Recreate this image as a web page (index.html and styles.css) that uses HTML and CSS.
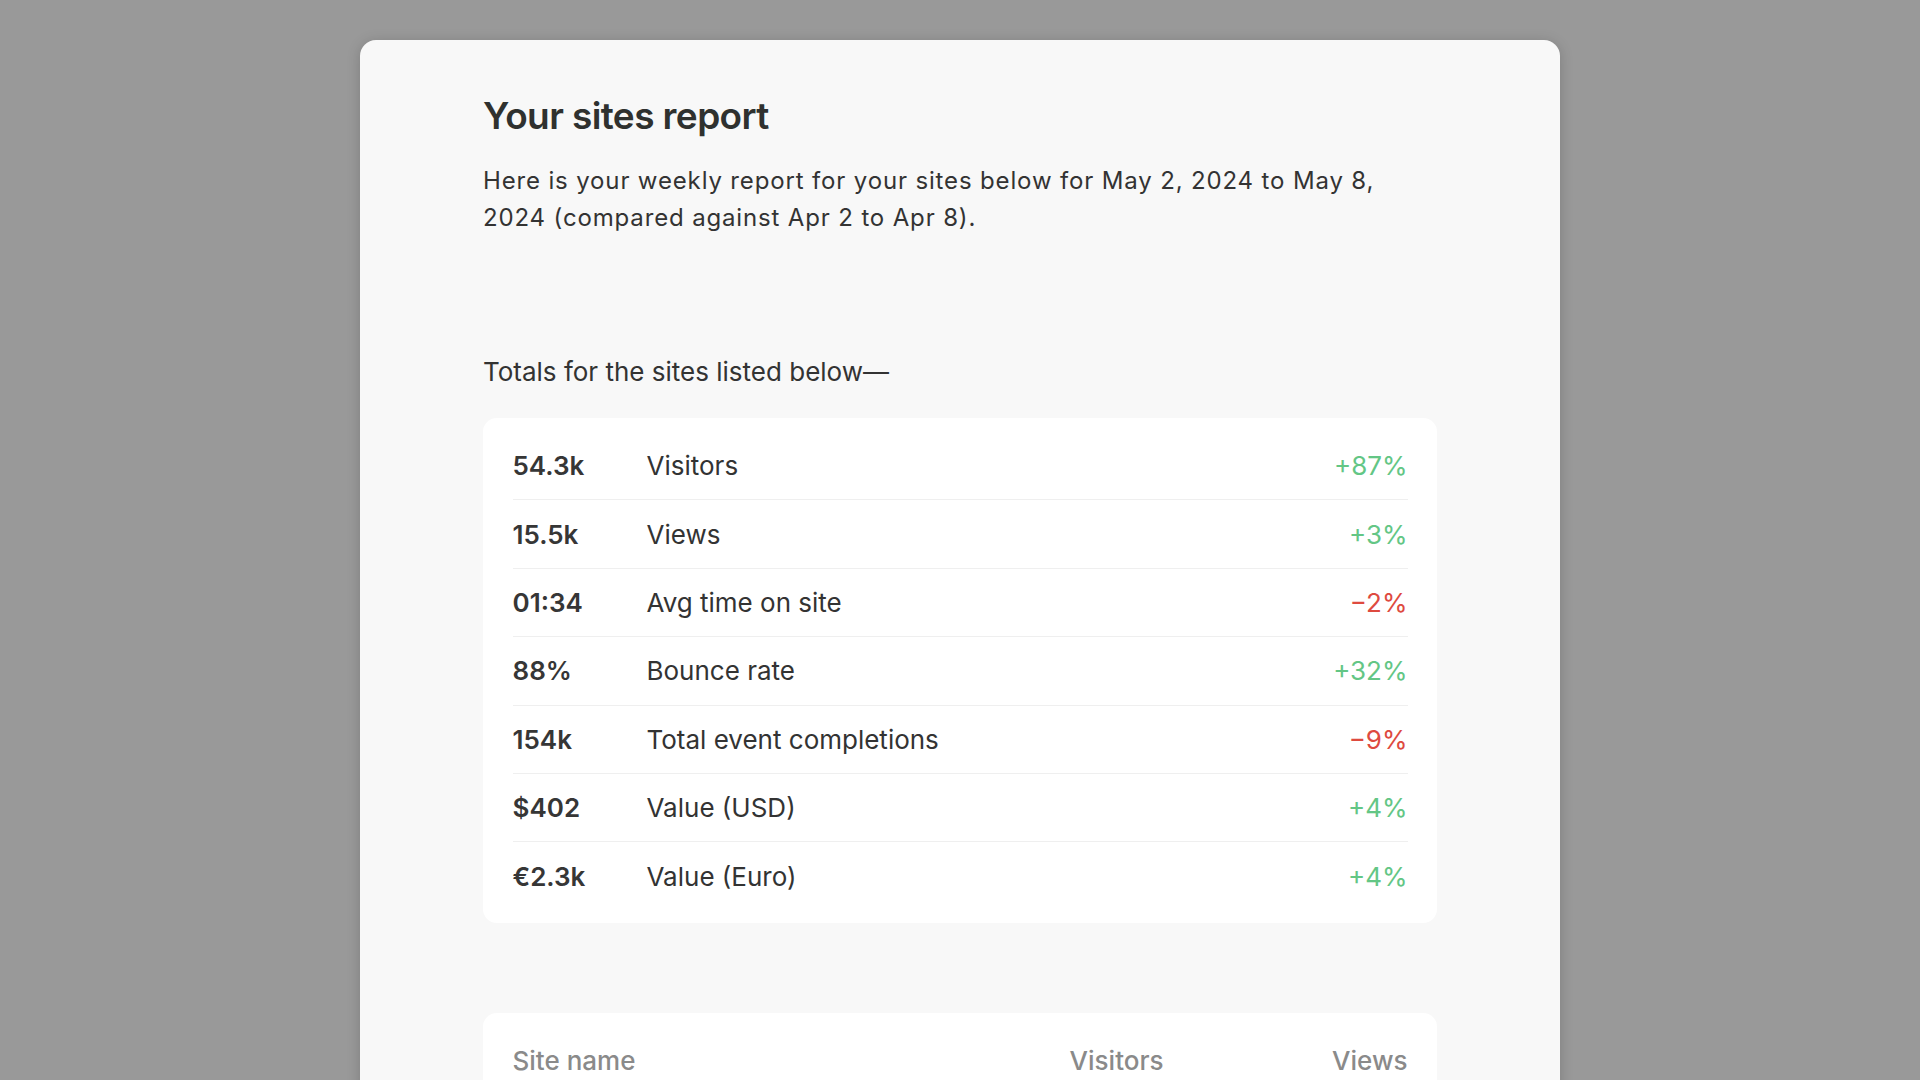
FILE: index.html
```html
<!DOCTYPE html>
<html lang="en">
<head>
<meta charset="utf-8">
<title>Your sites report</title>
<link rel="stylesheet" href="styles.css">
</head>
<body>
<main class="card">
  <h1 class="title">Your sites report</h1>
  <p class="intro">Here is your weekly report for your sites below for May 2, 2024 to May 8, 2024 (compared against Apr 2 to Apr 8).</p>

  <p class="lead">Totals for the sites listed below—</p>
  <section class="box totals">
    <div class="row"><span class="val">54.3k</span><span class="label">Visitors</span><span class="chg up">+87%</span></div>
    <div class="row"><span class="val">15.5k</span><span class="label">Views</span><span class="chg up">+3%</span></div>
    <div class="row"><span class="val">01:34</span><span class="label">Avg time on site</span><span class="chg down">−2%</span></div>
    <div class="row"><span class="val">88%</span><span class="label">Bounce rate</span><span class="chg up">+32%</span></div>
    <div class="row"><span class="val">154k</span><span class="label">Total event completions</span><span class="chg down">−9%</span></div>
    <div class="row"><span class="val">$402</span><span class="label">Value (USD)</span><span class="chg up">+4%</span></div>
    <div class="row"><span class="val">€2.3k</span><span class="label">Value (Euro)</span><span class="chg up">+4%</span></div>
  </section>

  <section class="box sites">
    <div class="row head"><span class="col-name">Site name</span><span class="col-num">Visitors</span><span class="col-num">Views</span></div>
  </section>
</main>
</body>
</html>
```
FILE: styles.css
```css
html, body {
  margin: 0;
  padding: 0;
}
body {
  background: #999999;
  font-family: "Inter", "Liberation Sans", sans-serif;
  color: #333;
  overflow: hidden;
  height: 1080px;
}
.card {
  width: 1200px;
  box-sizing: border-box;
  margin: 40px auto 0;
  padding: 54px 123px 200px 123px;
  background: #f8f8f8;
  border-radius: 16px;
  box-shadow: 0 2px 14px rgba(0, 0, 0, 0.18);
}
.title {
  margin: 0;
  font-size: 37px;
  line-height: 44px;
  font-weight: 600;
  letter-spacing: -0.6px;
  color: #2f312f;
}
.intro {
  margin: 24px 0 0;
  font-size: 24px;
  line-height: 37px;
  letter-spacing: 0.85px;
  color: #333;
}
.lead {
  margin: 118px 0 0;
  font-size: 26px;
  line-height: 36px;
  color: #333;
}
.box {
  background: #ffffff;
  border-radius: 14px;
  padding: 13.5px 29.5px;
}
.totals {
  margin-top: 27.5px;
}
.row {
  display: flex;
  align-items: center;
  height: 68.4px;
  box-sizing: border-box;
  font-size: 26px;
}
.row + .row {
  border-top: 1.5px solid #efefef;
}
.val {
  width: 134px;
  font-weight: 600;
  color: #363636;
}
.label {
  flex: 1;
  color: #333;
}
.chg {
  text-align: right;
}
.up { color: #63c685; }
.down { color: #de4a3f; }
.sites {
  margin-top: 90px;
}
.head {
  color: #8a8a8a;
  font-weight: 500;
}
.col-name { flex: 1; }
.col-num { text-align: right; }
.col-num + .col-num { width: 244px; }
```
